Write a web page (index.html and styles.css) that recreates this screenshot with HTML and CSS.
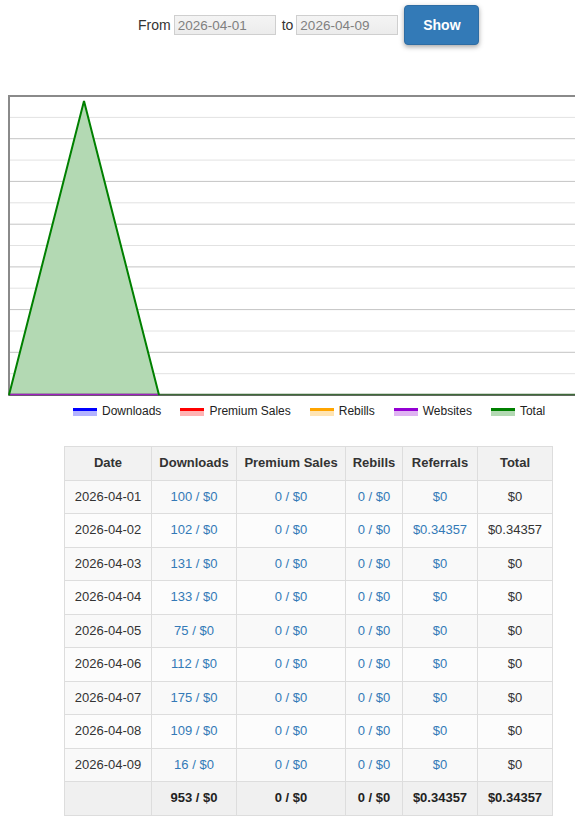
FILE: index.html
```
<!DOCTYPE html>
<html>
<head>
<meta charset="utf-8">
<link rel="stylesheet" href="styles.css">
</head>
<body>
<div class="filter">
  <span class="lbl">From</span>
  <input class="date" type="text" value="2026-04-01" disabled>
  <span class="lbl to">to</span>
  <input class="date" type="text" value="2026-04-09" disabled>
  <button class="show">Show</button>
</div>

<div class="chart">
<svg width="620" height="308" viewBox="0 0 620 308">
  <g stroke-width="1">
    <line x1="9" x2="620" y1="29.4" y2="29.4" stroke="#e2e2e2"/>
    <line x1="9" x2="620" y1="50.7" y2="50.7" stroke="#c4c4c4"/>
    <line x1="9" x2="620" y1="72.1" y2="72.1" stroke="#e2e2e2"/>
    <line x1="9" x2="620" y1="93.4" y2="93.4" stroke="#c4c4c4"/>
    <line x1="9" x2="620" y1="114.8" y2="114.8" stroke="#e2e2e2"/>
    <line x1="9" x2="620" y1="136.2" y2="136.2" stroke="#c4c4c4"/>
    <line x1="9" x2="620" y1="157.5" y2="157.5" stroke="#e2e2e2"/>
    <line x1="9" x2="620" y1="178.9" y2="178.9" stroke="#c4c4c4"/>
    <line x1="9" x2="620" y1="200.2" y2="200.2" stroke="#e2e2e2"/>
    <line x1="9" x2="620" y1="221.6" y2="221.6" stroke="#c4c4c4"/>
    <line x1="9" x2="620" y1="243" y2="243" stroke="#e2e2e2"/>
    <line x1="9" x2="620" y1="264.3" y2="264.3" stroke="#c4c4c4"/>
    <line x1="9" x2="620" y1="285.7" y2="285.7" stroke="#e2e2e2"/>
  </g>
  <line x1="8" x2="620" y1="8" y2="8" stroke="#8a8a8a" stroke-width="2"/>
  <line x1="9" x2="9" y1="7" y2="308" stroke="#8a8a8a" stroke-width="2"/>
  <polygon points="9,307 84,13 159,307" fill="#b3d9b3"/>
  <line x1="9" x2="620" y1="307" y2="307" stroke="#6a6a6a" stroke-width="2"/>
  <line x1="9" x2="620" y1="306.5" y2="306.5" stroke="#3f6a3a" stroke-width="1.5"/>
  <line x1="10" x2="159" y1="306.5" y2="306.5" stroke="#a020c0" stroke-width="1.5"/>
  <polyline points="9,307 84,13 159,307" fill="none" stroke="#008000" stroke-width="2" stroke-linejoin="miter"/>
</svg>
</div>

<div class="legend">
  <span class="item"><i class="sw blue"></i>Downloads</span>
  <span class="item"><i class="sw red"></i>Premium Sales</span>
  <span class="item"><i class="sw orange"></i>Rebills</span>
  <span class="item"><i class="sw purple"></i>Websites</span>
  <span class="item"><i class="sw green"></i>Total</span>
</div>

<table class="stats">
  <colgroup>
    <col style="width:87px"><col style="width:85px"><col style="width:109px"><col style="width:57px"><col style="width:75px"><col style="width:75px">
  </colgroup>
  <thead>
    <tr><th>Date</th><th>Downloads</th><th>Premium Sales</th><th>Rebills</th><th>Referrals</th><th>Total</th></tr>
  </thead>
  <tbody>
    <tr><td>2026-04-01</td><td class="a">100 / $0</td><td class="a">0 / $0</td><td class="a">0 / $0</td><td class="a">$0</td><td>$0</td></tr>
    <tr><td>2026-04-02</td><td class="a">102 / $0</td><td class="a">0 / $0</td><td class="a">0 / $0</td><td class="a">$0.34357</td><td>$0.34357</td></tr>
    <tr><td>2026-04-03</td><td class="a">131 / $0</td><td class="a">0 / $0</td><td class="a">0 / $0</td><td class="a">$0</td><td>$0</td></tr>
    <tr><td>2026-04-04</td><td class="a">133 / $0</td><td class="a">0 / $0</td><td class="a">0 / $0</td><td class="a">$0</td><td>$0</td></tr>
    <tr><td>2026-04-05</td><td class="a">75 / $0</td><td class="a">0 / $0</td><td class="a">0 / $0</td><td class="a">$0</td><td>$0</td></tr>
    <tr><td>2026-04-06</td><td class="a">112 / $0</td><td class="a">0 / $0</td><td class="a">0 / $0</td><td class="a">$0</td><td>$0</td></tr>
    <tr><td>2026-04-07</td><td class="a">175 / $0</td><td class="a">0 / $0</td><td class="a">0 / $0</td><td class="a">$0</td><td>$0</td></tr>
    <tr><td>2026-04-08</td><td class="a">109 / $0</td><td class="a">0 / $0</td><td class="a">0 / $0</td><td class="a">$0</td><td>$0</td></tr>
    <tr><td>2026-04-09</td><td class="a">16 / $0</td><td class="a">0 / $0</td><td class="a">0 / $0</td><td class="a">$0</td><td>$0</td></tr>
  </tbody>
  <tfoot>
    <tr><th></th><th>953 / $0</th><th>0 / $0</th><th>0 / $0</th><th>$0.34357</th><th>$0.34357</th></tr>
  </tfoot>
</table>
</body>
</html>
```
FILE: styles.css
```
html, body {
  margin: 0;
  padding: 0;
  background: #fff;
}
body {
  font-family: "Liberation Sans", Arial, sans-serif;
  font-size: 14px;
  color: #333;
  width: 575px;
  overflow: hidden;
}
.filter {
  display: flex;
  align-items: center;
  padding: 5px 0 0 138px;
  height: 40px;
}
.lbl {
  font-size: 14px;
  color: #333;
  margin-right: 3px;
}
.lbl.to {
  margin-left: 6px;
  margin-right: 3px;
}
.date {
  width: 102px;
  height: 20px;
  box-sizing: border-box;
  border: 1px solid #cfcfcf;
  background: linear-gradient(#f4f4f4, #ececec);
  color: #808080;
  font-family: "Liberation Sans", Arial, sans-serif;
  font-size: 13.5px;
  padding: 0 3px;
  margin: 0;
}
.show {
  margin-left: 6px;
  width: 75px;
  height: 40px;
  border: 1px solid #2e6da4;
  border-radius: 4px;
  background: #337ab7;
  color: #fff;
  font-family: "Liberation Sans", Arial, sans-serif;
  font-size: 14px;
  font-weight: bold;
  box-shadow: 0 2px 5px rgba(0, 0, 0, 0.35);
  padding: 0;
}
.chart {
  margin-top: 43px;
  height: 308px;
  overflow: hidden;
}
.chart svg {
  display: block;
}
.legend {
  display: flex;
  align-items: center;
  height: 30px;
  padding-left: 73px;
  font-size: 12px;
  color: #222;
}
.item {
  display: flex;
  align-items: center;
}
.item + .item {
  margin-left: 19px;
}
.sw {
  display: inline-block;
  width: 24px;
  height: 8px;
  box-sizing: border-box;
  border-top: 3px solid;
  margin-right: 5px;
  margin-top: 2px;
}
.sw.blue { border-color: #0000ff; background: #b3b3ff; }
.sw.red { border-color: #ff0000; background: #ffb3b3; }
.sw.orange { border-color: #ffa500; background: #ffe4b3; }
.sw.purple { border-color: #9400d3; background: #dfb3f2; }
.sw.green { border-color: #008000; background: #b3d9b3; }
.stats {
  margin: 20px 0 0 64px;
  border-collapse: collapse;
  width: 488px;
  table-layout: fixed;
  font-size: 13px;
}
.stats th, .stats td {
  border: 1px solid #dddddd;
  padding: 8px 4px;
  line-height: 16.5px;
  text-align: center;
  white-space: nowrap;
}
.stats thead th {
  background: #f2f2f2;
  color: #333;
  font-weight: bold;
}
.stats tbody td {
  background: #f9f9f9;
  color: #333;
}
.stats tbody tr:nth-child(even) td {
  background: #fcfcfc;
}
.stats td.a {
  color: #337ab7;
}
.stats tfoot th {
  background: #f0f0f0;
  color: #222;
  font-weight: bold;
}
```
